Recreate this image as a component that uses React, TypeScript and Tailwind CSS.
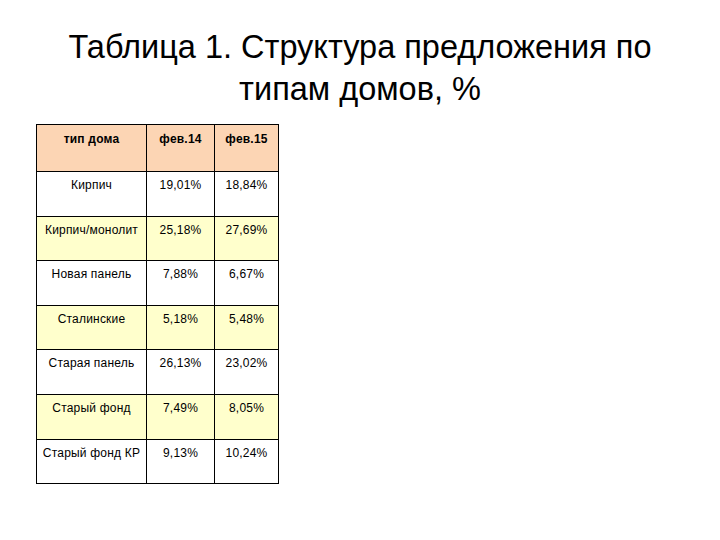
const rows = [
  { name: "Кирпич", a: "19,01%", b: "18,84%" },
  { name: "Кирпич/монолит", a: "25,18%", b: "27,69%" },
  { name: "Новая панель", a: "7,88%", b: "6,67%" },
  { name: "Сталинские", a: "5,18%", b: "5,48%" },
  { name: "Старая панель", a: "26,13%", b: "23,02%" },
  { name: "Старый фонд", a: "7,49%", b: "8,05%" },
  { name: "Старый фонд КР", a: "9,13%", b: "10,24%" },
]

export default function App() {
  return (
    <div className="w-[720px] h-[540px] bg-white text-black" style={{ fontFamily: '"Liberation Sans", Arial, sans-serif' }}>
      <h1 className="pt-[26px] text-center text-[32.5px] leading-[42px] font-normal">
        Таблица 1. Структура предложения по
        <br />
        типам домов, %
      </h1>
      <div className="ml-[36px] mt-[14px] w-[243px] border border-black text-[12px] leading-[14px] tracking-[0.2px]">
        <div className="flex h-[46px] bg-[#fcd5b4] font-bold">
          <div className="w-[110px] border-r border-black pt-[7px] text-center">тип дома</div>
          <div className="w-[68px] border-r border-black pt-[7px] text-center">фев.14</div>
          <div className="flex-1 pt-[7px] text-center">фев.15</div>
        </div>
        {rows.map((r, i) => (
          <div
            key={r.name}
            className={`flex h-[44.6px] border-t border-black ${i % 2 === 1 ? "bg-[#ffffcc]" : "bg-white"}`}
          >
            <div className="w-[110px] border-r border-black pt-[6px] text-center">{r.name}</div>
            <div className="w-[68px] border-r border-black pt-[6px] text-center">{r.a}</div>
            <div className="flex-1 pt-[6px] text-center">{r.b}</div>
          </div>
        ))}
      </div>
    </div>
  )
}
